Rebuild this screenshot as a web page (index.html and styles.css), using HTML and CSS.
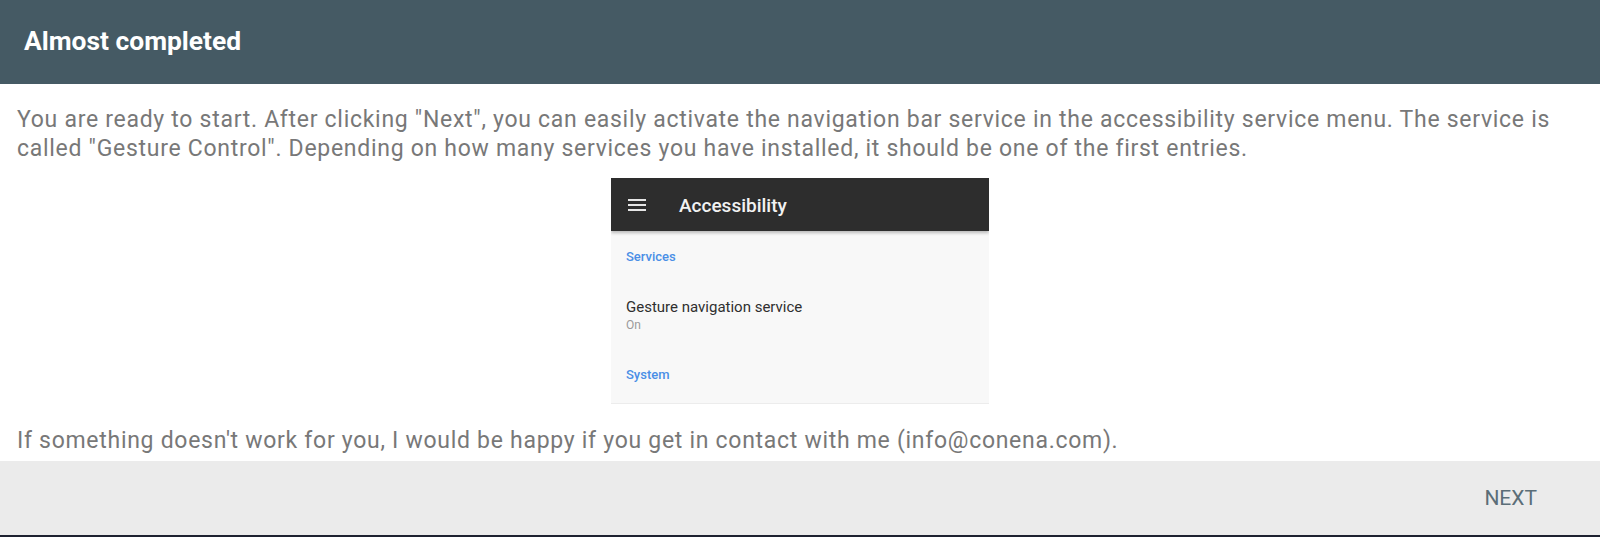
FILE: index.html
```html
<!DOCTYPE html>
<html lang="en">
<head>
    <meta charset="UTF-8">
    <meta name="viewport" content="width=device-width, initial-scale=1.0">
    <title>Almost completed</title>
    <link rel="stylesheet" href="styles.css">
</head>
<body>

    <div class="page">
        <header class="top-bar">
            <h1>Almost completed</h1>
        </header>

        <main class="content">
            <p class="intro">You are ready to start. After clicking "Next", you can easily activate the navigation bar service in the accessibility service menu. The service is called "Gesture Control". Depending on how many services you have installed, it should be one of the first entries.</p>

            <!-- preview of the system accessibility settings screen -->
            <div class="preview">
                <div class="preview-toolbar">
                    <svg class="menu-icon" width="18" height="14" viewBox="0 0 18 14">
                        <rect x="0" y="1" width="18" height="2" fill="#e6e6e6"/>
                        <rect x="0" y="6" width="18" height="2" fill="#e6e6e6"/>
                        <rect x="0" y="11" width="18" height="2" fill="#e6e6e6"/>
                    </svg>
                    <span class="preview-title">Accessibility</span>
                </div>
                <div class="preview-list">
                    <div class="category first">Services</div>
                    <div class="item-title">Gesture navigation service</div>
                    <div class="item-summary">On</div>
                    <div class="category">System</div>
                </div>
            </div>

            <p class="contact">If something doesn't work for you, I would be happy if you get in contact with me (info@conena.com).</p>
        </main>

        <footer class="bottom-bar">
            <button type="button" class="next-button">NEXT</button>
        </footer>
    </div>

</body>
</html>
```

FILE: styles.css
```css
body {
    margin: 0;
    font-family: Roboto, "Liberation Sans", sans-serif;
    background-color: #fff;
}

.page {
    display: flex;
    flex-direction: column;
    height: 537px;
}

.top-bar {
    height: 84px;
    background-color: #455a64;
    display: flex;
    align-items: center;
    padding-left: 24px;
    box-sizing: border-box;
}

.top-bar h1 {
    margin: 0;
    color: #fff;
    font-size: 26.4px;
    font-weight: 700;
    line-height: 30px;
    padding-bottom: 2px;
}

.content {
    flex: 1;
    padding: 22px 17px 0 17px;
}

.intro,
.contact {
    margin: 0;
    color: #787878;
    font-size: 23px;
    letter-spacing: 0.71px;
    line-height: 28.6px;
}

.contact {
    margin-top: 23px;
}

/* settings screen preview */
.preview {
    width: 378px;
    height: 226px;
    margin: 15px auto 0 auto;
    background-color: #f8f8f8;
    border-bottom: 1px solid #ececec;
    box-sizing: border-box;
    overflow: hidden;
}

.preview-toolbar {
    height: 53px;
    background-color: #2d2d2d;
    display: flex;
    align-items: center;
    padding-left: 17px;
    box-shadow: 0 2px 3px rgba(0, 0, 0, 0.25);
    position: relative;
}

.menu-icon {
    display: block;
    margin-top: 1px;
}

.preview-title {
    margin-left: 33px;
    color: #f2f2f2;
    font-size: 19px;
    font-weight: 500;
    line-height: 22px;
    margin-top: 2px;
}

.preview-list {
    padding-left: 15px;
}

.category {
    color: #4a8fe6;
    font-size: 13px;
    font-weight: 500;
    line-height: 16px;
    margin-top: 35px;
}

.category.first {
    margin-top: 18px;
}

.item-title {
    color: #2f2f2f;
    font-size: 15px;
    line-height: 18px;
    margin-top: 33px;
}

.item-summary {
    color: #9a9a9a;
    font-size: 12px;
    line-height: 14px;
    margin-top: 2px;
}

.bottom-bar {
    height: 76px;
    background-color: #ebebeb;
    border-bottom: 2px solid #1d2130;
    box-sizing: border-box;
    display: flex;
    align-items: center;
    justify-content: flex-end;
    padding-right: 47px;
}

.next-button {
    background: none;
    border: none;
    padding: 8px 16px;
    font-family: Roboto, "Liberation Sans", sans-serif;
    font-size: 21px;
    font-weight: 400;
    color: #5b6e78;
    cursor: pointer;
}
```
